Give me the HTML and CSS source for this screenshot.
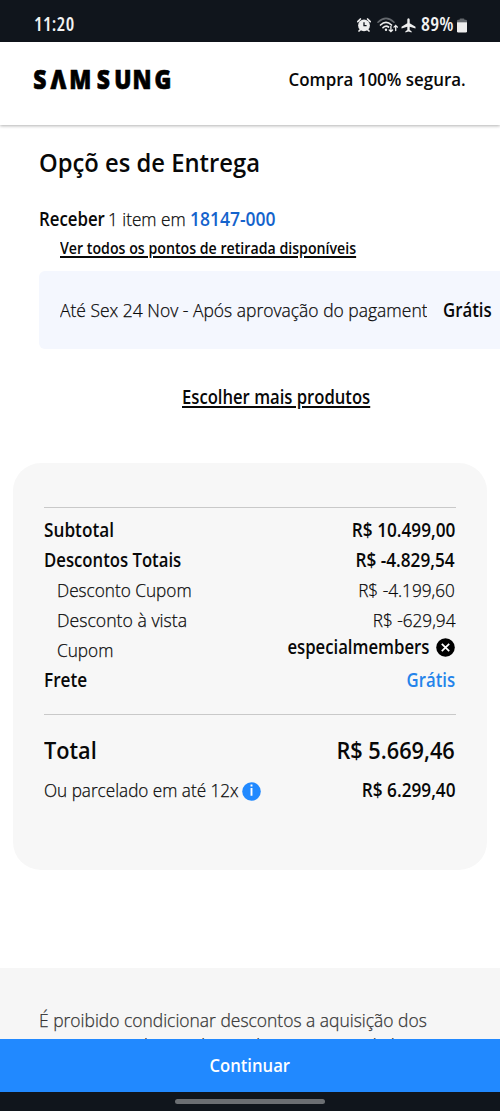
FILE: index.html
```html
<!DOCTYPE html>
<html lang="pt-BR">
<head>
<meta charset="utf-8">
<title>Samsung - Opções de Entrega</title>
<link rel="stylesheet" href="styles.css">
</head>
<body>
<div class="phone">
  <div class="status">
    <span class="clock">11:20</span>
    <div class="status-icons">
      <svg class="alarm" width="14" height="14" viewBox="0 0 14 14">
        <circle cx="7" cy="7.4" r="5.9" fill="#eee"/>
        <path d="M.8 3.6 3.4 1M13.200 3.600 10.600 1M2 13l1.700-1.600M12 13l-1.700-1.600" stroke="#eee" stroke-width="1.700" stroke-linecap="round"/>
        <path d="M7 4.2v3.4h2.6" fill="none" stroke="#10151c" stroke-width="1.3"/>
      </svg>
      <svg class="wifi" width="21" height="16" viewBox="0 0 21 16">
        <g fill="none" stroke-linecap="round">
          <path d="M1 5.2Q9 -2.6 17 5.2" stroke="#64686d" stroke-width="1.6"/>
          <path d="M3.5 8Q9 2.8 14.5 8" stroke="#eee" stroke-width="1.7"/>
          <path d="M6 10.6Q9 8 11.5 10" stroke="#eee" stroke-width="1.7"/>
          <path d="M13.9 9.5v5M12.2 13l1.7 1.7 1.7-1.7M18.7 13.5v-5M17 10.1l1.7-1.7 1.7 1.7" stroke="#eee" stroke-width="1.3"/>
        </g>
        <circle cx="9" cy="12.8" r="1.2" fill="#eee"/>
      </svg>
      <svg class="plane" width="15" height="15" viewBox="0 0 15 15">
        <path d="M7.5.3c.8 0 1.2.8 1.2 1.8v3.2l5.8 3.5v1.6L8.7 8.8v3.1l1.900 1.400v1.200l-3.100-.900-3.100.900v-1.200l1.900-1.400V8.800L.5 10.400V8.800l5.800-3.500V2.100C6.300 1.100 6.700.3 7.500.3z" fill="#eee"/>
      </svg>
      <span class="percent">89%</span>
      <svg class="battery" width="10" height="15" viewBox="0 0 10 15">
        <path d="M0 4.500V3Q0 1.700 1.300 1.700H2.500Q2.500.4 3.500.4h3Q7.500.4 7.500 1.700h1.200Q10 1.700 10 3v1.500z" fill="#64686d"/>
        <path d="M0 4.200h10v9Q10 14.500 8.700 14.500H1.300Q0 14.500 0 13.200z" fill="#eee"/>
      </svg>
    </div>
  </div>

  <header class="header">
    <svg class="logo" width="142" height="26" viewBox="0 0 142 26" role="img" aria-label="Samsung">
      <text transform="scale(.86 1)" y="22" x="1.600 21.400 43.200 75.400 95.500 116.800 142.500">SΛMSUNG</text>
    </svg>
    <span class="secure right">Compra 100% segura.</span>
  </header>

  <main class="content">
    <section class="delivery">
      <h1 class="title">Opçõ es de Entrega</h1>
      <p class="receive"><b class="receive-label">Receber</b><span class="receive-items">1 item em</span><a class="zip">18147-000</a></p>
      <a class="pickup">Ver todos os pontos de retirada disponíveis</a>
      <div class="option">
        <span class="option-clip"><span class="option-date">Até Sex 24 Nov - Após aprovação do pagamento</span></span>
        <b class="option-price">Grátis</b>
      </div>
      <a class="more">Escolher mais produtos</a>
    </section>

    <section class="summary">
      <div class="lines">
        <div class="row strong"><span>Subtotal</span><span class="right">R$ 10.499,00</span></div>
        <div class="row strong"><span class="tight">Descontos Totais</span><span class="right">R$ -4.829,54</span></div>
        <div class="row sub"><span>Desconto Cupom</span><span class="right">R$ -4.199,60</span></div>
        <div class="row sub"><span class="vista">Desconto à vista</span><span class="right">R$ -629,94</span></div>
        <div class="row sub"><span>Cupom</span>
          <div class="coupon"><span class="right tight">especialmembers</span>
            <svg width="19" height="19" viewBox="0 0 19 19"><circle cx="9.500" cy="9.500" r="9.300"/><path d="M5.800 5.800l7.400 7.400M13.200 5.800l-7.400 7.400" stroke="#fff" stroke-width="1.700"/></svg>
          </div>
        </div>
        <div class="row strong"><span>Frete</span><span class="free right tight">Grátis</span></div>
      </div>
      <div class="row total"><span>Total</span><span class="right">R$ 5.669,46</span></div>
      <div class="row installments">
        <span class="parcel">Ou parcelado em até 12x</span>
        <svg class="info" width="19" height="19" viewBox="0 0 19 19"><circle cx="9.500" cy="9.500" r="9.300" fill="#2189ff"/><path d="M9.500 6.100v7.700M9.500 2.500v2" stroke="#fff" stroke-width="1.900"/></svg>
        <span class="parcel-value right">R$ 6.299,40</span>
      </div>
    </section>

    <footer class="legal"><p class="legal-text">É proibido condicionar descontos a aquisição dos<br>seguros, sendo sua demanda uma opção de livre</p></footer>
  </main>

  <button class="continue"><span>Continuar</span></button>
  <div class="nav"><span class="handle"></span></div>
</div>
</body>
</html>
```
FILE: styles.css
```css
* { box-sizing: border-box; }

body {
  margin: 0;
  background: #fff;
  color: #080808;
  font-family: "Open Sans", "Noto Sans", sans-serif;
  font-size: 19px;
  line-height: 30px;
  white-space: nowrap;
}

h1, p { margin: 0; }

svg { display: block; flex: none; }

.phone {
  display: flex;
  flex-direction: column;
  height: 1111px;
  overflow: hidden;
}

/* Slightly narrowed letterforms, anchored to the side the text is aligned to */
.secure, .title, .receive > *, .pickup, .option-date, .option-price, .more, .row span, .legal-text {
  transform: scaleX(var(--narrow, .905));
  transform-origin: left;
}

.phone .right { transform-origin: right; }
.tight { --narrow: .88; }
.vista { --narrow: .93; }

/* Status bar */
.status {
  display: flex;
  flex: none;
  justify-content: space-between;
  height: 42px;
  padding: 9px 33px 0 34px;
  background: #10151c;
  color: #f2f2f2;
}

.clock { font-weight: 600; font-stretch: 75%; letter-spacing: .4px; }
.status-icons { display: flex; align-items: flex-start; }
.alarm { margin: 9px 6px 0 0; }
.wifi { margin: 8px 3px 0 0; }
.plane { margin: 9px 5px 0 0; }
.percent { width: 33px; font-size: 20px; font-weight: 600; font-stretch: 75%; letter-spacing: .2px; }
.battery { margin: 9px 0 0 3px; }

/* Header */
.header {
  display: flex;
  flex: none;
  align-items: center;
  justify-content: space-between;
  height: 83px;
  padding: 0 34px 9px 32px;
  box-shadow: 0 1px 3px rgba(0, 0, 0, .3);
  z-index: 1;
}

.logo { margin-top: 2px; overflow: visible; }
.logo text { font-size: 26.5px; font-weight: 800; fill: #000; stroke: #000; stroke-width: .7px; }
.secure { --narrow: .915; font-size: 18.5px; font-weight: 600; }

.content { flex: 1; min-height: 0; overflow: hidden; }

/* Delivery */
.delivery {
  display: flex;
  flex-direction: column;
  align-items: flex-start;
  padding: 17px 0 0 39px;
}

.title { --narrow: .933; font-size: 25.5px; line-height: 40px; font-weight: 600; }
.receive { display: grid; grid-template-columns: 69px 82px auto; margin-top: 22px; }
.receive-label { --narrow: .885; font-weight: 600; }
.zip { --narrow: .92; font-weight: 600; color: #1463cc; }

.pickup { --narrow: .915; margin: -1px 0 0 21px; font-size: 15.5px; font-weight: 600; }

.pickup, .more {
  text-decoration: underline;
  text-decoration-thickness: 1.5px;
  text-underline-offset: 2px;
}

.option {
  display: flex;
  align-self: stretch;
  align-items: center;
  height: 78px;
  margin-top: 8px;
  padding-left: 21px;
  border-radius: 6px 0 0 6px;
  background: #f4f7fe;
}

.option-clip { flex: none; width: 367px; margin-right: 16px; overflow: hidden; }
.option-date { --narrow: .92; display: block; width: max-content; }
.option-price { --narrow: .885; font-weight: 600; }
.more { --narrow: .876; margin: 33px 0 0 143px; font-weight: 600; }

.receive-items, .option-date, .sub, .parcel, .legal {
  font-weight: 300;
  -webkit-text-stroke: .25px currentColor;
}

/* Order summary */
.summary {
  height: 407px;
  margin: 51px 13px 0;
  padding: 44px 31px 0;
  border-radius: 28px;
  background: #f7f7f7;
}

.lines {
  height: 208px;
  padding-top: 7px;
  border-top: 1px solid #c9c9c9;
  border-bottom: 1px solid #c9c9c9;
}

.row { display: flex; justify-content: space-between; height: 30px; padding-right: 1px; }
.strong { font-weight: 600; }
.sub { padding-left: 13px; }

.coupon {
  display: flex;
  align-items: center;
  gap: 7px;
  height: 30px;
  margin-top: -3px;
  font-weight: 600;
  -webkit-text-stroke: 0;
}

.free { color: #2483ea; }

.total { margin-top: 20px; font-size: 24px; font-weight: 600; }
.installments { margin-top: 10px; }
.installments .parcel { --narrow: .902; width: 198px; }
.info { margin: 7px auto 0 0; }
.parcel-value { font-weight: 600; }

/* Legal notice */
.legal {
  margin-top: 98px;
  padding: 40px 39px 0;
  background: #f6f6f6;
  color: #333;
  line-height: 24.5px;
}

.legal-text { --narrow: .918; }

/* Bottom bar */
.continue {
  flex: none;
  height: 53px;
  padding: 0 0 2px;
  border: 0;
  background: #2189ff;
  color: #fff;
  font: 600 18.5px/30px "Open Sans", sans-serif;
}

.continue span { display: inline-block; transform: scaleX(.9); }

.nav {
  display: flex;
  flex: none;
  justify-content: center;
  height: 19px;
  padding-top: 7px;
  background: #10151c;
}

.handle { width: 150px; height: 5px; border-radius: 3px; background: #6b6e72; }
```
